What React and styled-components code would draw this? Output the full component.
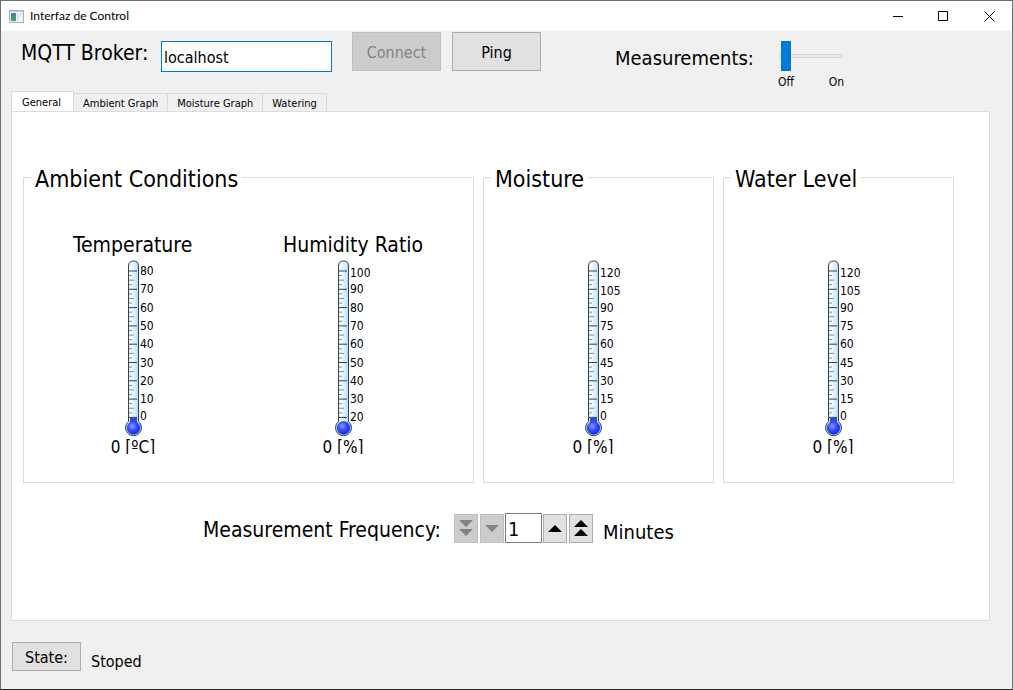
import React from "react";
import styled, { createGlobalStyle } from "styled-components";

const GlobalStyle = createGlobalStyle`
  *, *::before, *::after { box-sizing: border-box; }
  body { margin: 0; background: #f0f0f0; }
  button, input { font-family: inherit; color: inherit; margin: 0; }
`;

const Window = styled.div`
  display: flex;
  flex-direction: column;
  min-height: 100vh;
  border: 1px solid #6e6e70;
  border-bottom-color: #2b2b2b;
  background: #f0f0f0;
  color: #000;
  font-family: "DejaVu Sans Condensed", "Noto Sans", sans-serif;
  font-size: 16px;
`;

const TitleBar = styled.header`
  display: flex;
  align-items: center;
  height: 30px;
  padding-left: 8px;
  background: #fff;
`;

const Title = styled.h1`
  flex: 1;
  margin: 0 0 0 6px;
  font: 400 12px/16px Lato, "Noto Sans", sans-serif;
`;

const CaptionButton = styled.button`
  display: grid;
  place-items: center;
  width: 46px;
  height: 29px;
  padding: 0;
  border: 0;
  background: transparent;
`;

const Toolbar = styled.div`
  display: flex;
  align-items: flex-start;
  height: 60px;
  padding: 1px 20px 0;
`;

const BrokerField = styled.label`
  display: flex;
  width: 311px;
  margin-right: 20px;
  font-size: 21px;
  line-height: 42px;
  white-space: nowrap;
`;

const TextInput = styled.input`
  width: 171px;
  height: 31px;
  margin: 9px 0 0 auto;
  padding: 1px 2px 0;
  border: 1px solid ${(p) => (p.$focused ? "#0078d7" : "#7a7a7a")};
  background: #fff;
  font-size: 16px;
  outline: 0;
`;

const Button = styled.button`
  width: ${(p) => p.$width}px;
  height: ${(p) => p.$height}px;
  padding: 1px 0 0;
  border: 1px solid #adadad;
  background: #e1e1e1;
  font-size: 16px;
  &:disabled {
    border-color: #bfbfbf;
    background: #cccccc;
    color: #838383;
  }
`;

const ToolbarButtons = styled.div`
  display: flex;
  gap: 11px;
  margin-right: 74px;
`;

const SwitchLabel = styled.label`
  width: 163px;
  font-size: 20px;
  line-height: 52px;
`;

const SwitchBox = styled.div`
  display: flex;
  flex-direction: column;
  width: 66px;
  padding-top: 9px;
`;

const Slider = styled.input`
  appearance: none;
  width: 62px;
  height: 30px;
  margin: 0 2px;
  background: transparent;
  &::-webkit-slider-runnable-track {
    height: 4px;
    border: 1px solid #d6d6d6;
    background: #e7eaea;
  }
  &::-webkit-slider-thumb {
    appearance: none;
    width: 10px;
    height: 30px;
    margin-top: -14px;
    background: #007ad9;
  }
`;

const SwitchEnds = styled.div`
  display: flex;
  justify-content: space-between;
  font-size: 12px;
  line-height: 22px;
`;

const TabList = styled.div`
  display: flex;
  align-items: flex-end;
  height: 20px;
  margin-left: 10px;
`;

const Tab = styled.button`
  height: ${(p) => (p.$active ? 21 : 18)}px;
  margin-bottom: ${(p) => (p.$active ? -1 : 0)}px;
  padding: ${(p) => (p.$active ? "1px 12px 0 10px" : "2px 9px 0")};
  border: 1px solid #d9d9d9;
  border-bottom: 0;
  border-left-width: ${(p) => (p.$active ? 1 : 0)}px;
  background: ${(p) => (p.$active ? "#fff" : "#f0f0f0")};
  font-size: 11px;
  line-height: 16px;
`;

const Pane = styled.main`
  flex: 1;
  margin: 0 22px 0 10px;
  padding: 51px 35px 0 11px;
  border: 1px solid #dcdcdc;
  background: #fff;
`;

const Groups = styled.div`
  display: grid;
  grid-template-columns: 451fr 231fr 231fr;
  gap: 9px;
`;

const Group = styled.fieldset`
  min-width: 0;
  height: 320px;
  margin: 0;
  padding: 0;
  border: 1px solid #dcdcdc;
`;

const Legend = styled.legend`
  margin-left: 7px;
  padding: 3px 4px 0;
  font-size: 23px;
  line-height: 26px;
`;

const GroupBody = styled.div`
  display: flex;
  padding: ${(p) => (p.$pair ? "39px 25px 0 4px" : "39px 11px 0 0")};
`;

const GaugeColumn = styled.section`
  flex: 1;
  display: flex;
  flex-direction: column;
  align-items: center;
`;

const GaugeTitle = styled.h2`
  align-self: stretch;
  height: 29px;
  margin: 0;
  padding-left: 45px;
  font-size: 21px;
  font-weight: 400;
  line-height: 28px;
`;

const GaugeValue = styled.output`
  height: 15px;
  overflow: hidden;
  font-size: 17px;
  line-height: 16px;
`;

const FrequencyRow = styled.div`
  display: flex;
  align-items: flex-start;
  margin: 30px 0 0 180px;
  font-size: 21px;
  line-height: 34px;
`;

const FrequencyLabel = styled.label`
  width: 251px;
  white-space: nowrap;
`;

const Stepper = styled.div`
  display: flex;
  align-items: center;
  gap: 2px;
`;

const StepInput = styled(TextInput)`
  width: 37px;
  height: 30px;
  margin: 0 -1px;
  font-size: 20px;
`;

const StepButton = styled(Button)`
  display: grid;
  place-items: center;
  padding: 0;
`;

const Unit = styled.span`
  margin-left: 10px;
  padding-top: 2px;
  font-size: 20px;
`;

const StatusBar = styled.footer`
  display: flex;
  height: 68px;
  gap: 10px;
  padding: 21px 11px 0;
`;

const StatusText = styled.span`
  line-height: 40px;
`;

function AppIcon() {
  return (
    <svg width="15" height="13" viewBox="0 0 15 13" aria-hidden="true">
      <defs>
        <linearGradient id="appScreen" x1="0" y1="0" x2="0" y2="1">
          <stop offset="0" stopColor="#4b7fb0" />
          <stop offset="1" stopColor="#4c9a72" />
        </linearGradient>
      </defs>
      <rect x="0.5" y="0.5" width="14" height="12" fill="#eef0f2" stroke="#a9b0b6" />
      <path d="M1 1.5h13" stroke="#c5cbd0" />
      <rect x="2" y="3" width="5" height="8" fill="url(#appScreen)" />
      <rect x="8" y="3" width="2" height="8" fill="#dfe4e8" />
      <rect x="11" y="3" width="2" height="8" fill="#fff" />
      <rect x="11" y="3" width="2" height="4" fill="#dcebe0" />
    </svg>
  );
}

const TOP_TICK = 11;
const TICK_STEP = 18.3;
const MINOR_WIDTHS = [8, 3, 5, 3];

function Thermometer({ name, labels }) {
  const count = labels.length - 1;
  const ticks = Array.from({ length: count * 4 + 1 }, (_, i) => ({
    y: TOP_TICK + (i * TICK_STEP) / 4,
    width: MINOR_WIDTHS[i % 4],
    major: i % 4 === 0,
  }));
  const fillTop = labels[count] === 0 ? 158 : 162;
  return (
    <svg width="80" height="179" viewBox="0 0 80 179" role="img" aria-label={name}>
      <defs>
        <linearGradient id="glass" x1="0" x2="1">
          <stop offset="0" stopColor="#d4e9f7" />
          <stop offset="0.35" stopColor="#f7fcff" />
          <stop offset="0.6" stopColor="#d6eeff" />
          <stop offset="1" stopColor="#8ecbf8" />
        </linearGradient>
        <radialGradient id="bulb" cx="0.4" cy="0.35" r="0.65">
          <stop offset="0" stopColor="#8c98ff" />
          <stop offset="0.5" stopColor="#3c50ff" />
          <stop offset="1" stopColor="#1526e8" />
        </radialGradient>
      </defs>
      <path
        d="M35.500 161.500V6Q35.500 1 40.500 1T45.500 6V161.500A8 8 0 1 1 35.500 161.500Z"
        fill="url(#glass)"
        stroke="#35434d"
      />
      <circle cx="40.500" cy="168" r="7" fill="#9fd6fb" />
      <rect x="37" y={fillTop} width="7" height="7" fill="#3346f0" />
      <circle cx="40.500" cy="168" r="6.500" fill="url(#bulb)" stroke="#1d55c0" strokeWidth="0.500" />
      {ticks.map((t) => (
        <path
          key={t.y}
          d={`M36 ${t.y}h${t.width}`}
          stroke={t.major ? "#34404a" : "#7f8d98"}
        />
      ))}
      {labels.map((label, i) => (
        <text
          key={label}
          x="47"
          y={TOP_TICK + i * TICK_STEP + (label === 0 ? 3 : label > 99 ? 6 : 4)}
          fontSize="12"
        >
          {label}
        </text>
      ))}
    </svg>
  );
}

function Gauge({ title, name, unit, labels }) {
  return (
    <GaugeColumn>
      <GaugeTitle>{title}</GaugeTitle>
      <Thermometer name={name} labels={labels} />
      <GaugeValue>0 [{unit}]</GaugeValue>
    </GaugeColumn>
  );
}

function Arrows({ up, double }) {
  const shape = up ? "M0 7L7 0L14 7Z" : "M0 0L7 7L14 0Z";
  return (
    <svg width="14" height={double ? 16 : 7} fill="currentColor" aria-hidden="true">
      <path d={shape} />
      {double && <path d={shape} transform="translate(0 9)" />}
    </svg>
  );
}

const AMBIENT = [80, 70, 60, 50, 40, 30, 20, 10, 0];
const HUMIDITY = [100, 90, 80, 70, 60, 50, 40, 30, 20];
const PERCENT = [120, 105, 90, 75, 60, 45, 30, 15, 0];
const TABS = ["General", "Ambient Graph", "Moisture Graph", "Watering"];

export default function App() {
  return (
    <>
      <GlobalStyle />
      <Window>
        <TitleBar>
          <AppIcon />
          <Title>Interfaz de Control</Title>
          <CaptionButton aria-label="Minimize">
            <svg width="11" height="11"><path d="M1 5.500h10" stroke="#000" /></svg>
          </CaptionButton>
          <CaptionButton aria-label="Maximize">
            <svg width="11" height="11"><path d="M.5.5h9v9h-9z" fill="none" stroke="#000" /></svg>
          </CaptionButton>
          <CaptionButton aria-label="Close">
            <svg width="11" height="11"><path d="M.5.5l10 10M10.500.5l-10 10" stroke="#000" /></svg>
          </CaptionButton>
        </TitleBar>

        <Toolbar>
          <BrokerField>
            MQTT Broker:
            <TextInput type="text" defaultValue="localhost" $focused />
          </BrokerField>
          <ToolbarButtons>
            <Button $width={89} $height={39} disabled>Connect</Button>
            <Button $width={89} $height={39}>Ping</Button>
          </ToolbarButtons>
          <SwitchLabel htmlFor="measurements">Measurements:</SwitchLabel>
          <SwitchBox>
            <Slider id="measurements" type="range" min="0" max="1" defaultValue="0" />
            <SwitchEnds>
              <span>Off</span>
              <span>On</span>
            </SwitchEnds>
          </SwitchBox>
        </Toolbar>

        <TabList role="tablist">
          {TABS.map((tab, i) => (
            <Tab key={tab} role="tab" aria-selected={i === 0} $active={i === 0}>
              {tab}
            </Tab>
          ))}
        </TabList>

        <Pane>
          <Groups>
            <Group>
              <Legend>Ambient Conditions</Legend>
              <GroupBody $pair>
                <Gauge title="Temperature" name="Temperature" unit="ºC" labels={AMBIENT} />
                <Gauge title="Humidity Ratio" name="Humidity Ratio" unit="%" labels={HUMIDITY} />
              </GroupBody>
            </Group>
            <Group>
              <Legend>Moisture</Legend>
              <GroupBody>
                <Gauge name="Moisture" unit="%" labels={PERCENT} />
              </GroupBody>
            </Group>
            <Group>
              <Legend>Water Level</Legend>
              <GroupBody>
                <Gauge name="Water Level" unit="%" labels={PERCENT} />
              </GroupBody>
            </Group>
          </Groups>

          <FrequencyRow>
            <FrequencyLabel htmlFor="frequency">Measurement Frequency:</FrequencyLabel>
            <Stepper>
              <StepButton $width={24} $height={29} disabled aria-label="Decrease a lot">
                <Arrows double />
              </StepButton>
              <StepButton $width={24} $height={29} disabled aria-label="Decrease">
                <Arrows />
              </StepButton>
              <StepInput id="frequency" type="text" defaultValue="1" />
              <StepButton $width={24} $height={29} aria-label="Increase">
                <Arrows up />
              </StepButton>
              <StepButton $width={24} $height={29} aria-label="Increase a lot">
                <Arrows up double />
              </StepButton>
            </Stepper>
            <Unit>Minutes</Unit>
          </FrequencyRow>
        </Pane>

        <StatusBar>
          <Button $width={69} $height={29}>State:</Button>
          <StatusText>Stoped</StatusText>
        </StatusBar>
      </Window>
    </>
  );
}
